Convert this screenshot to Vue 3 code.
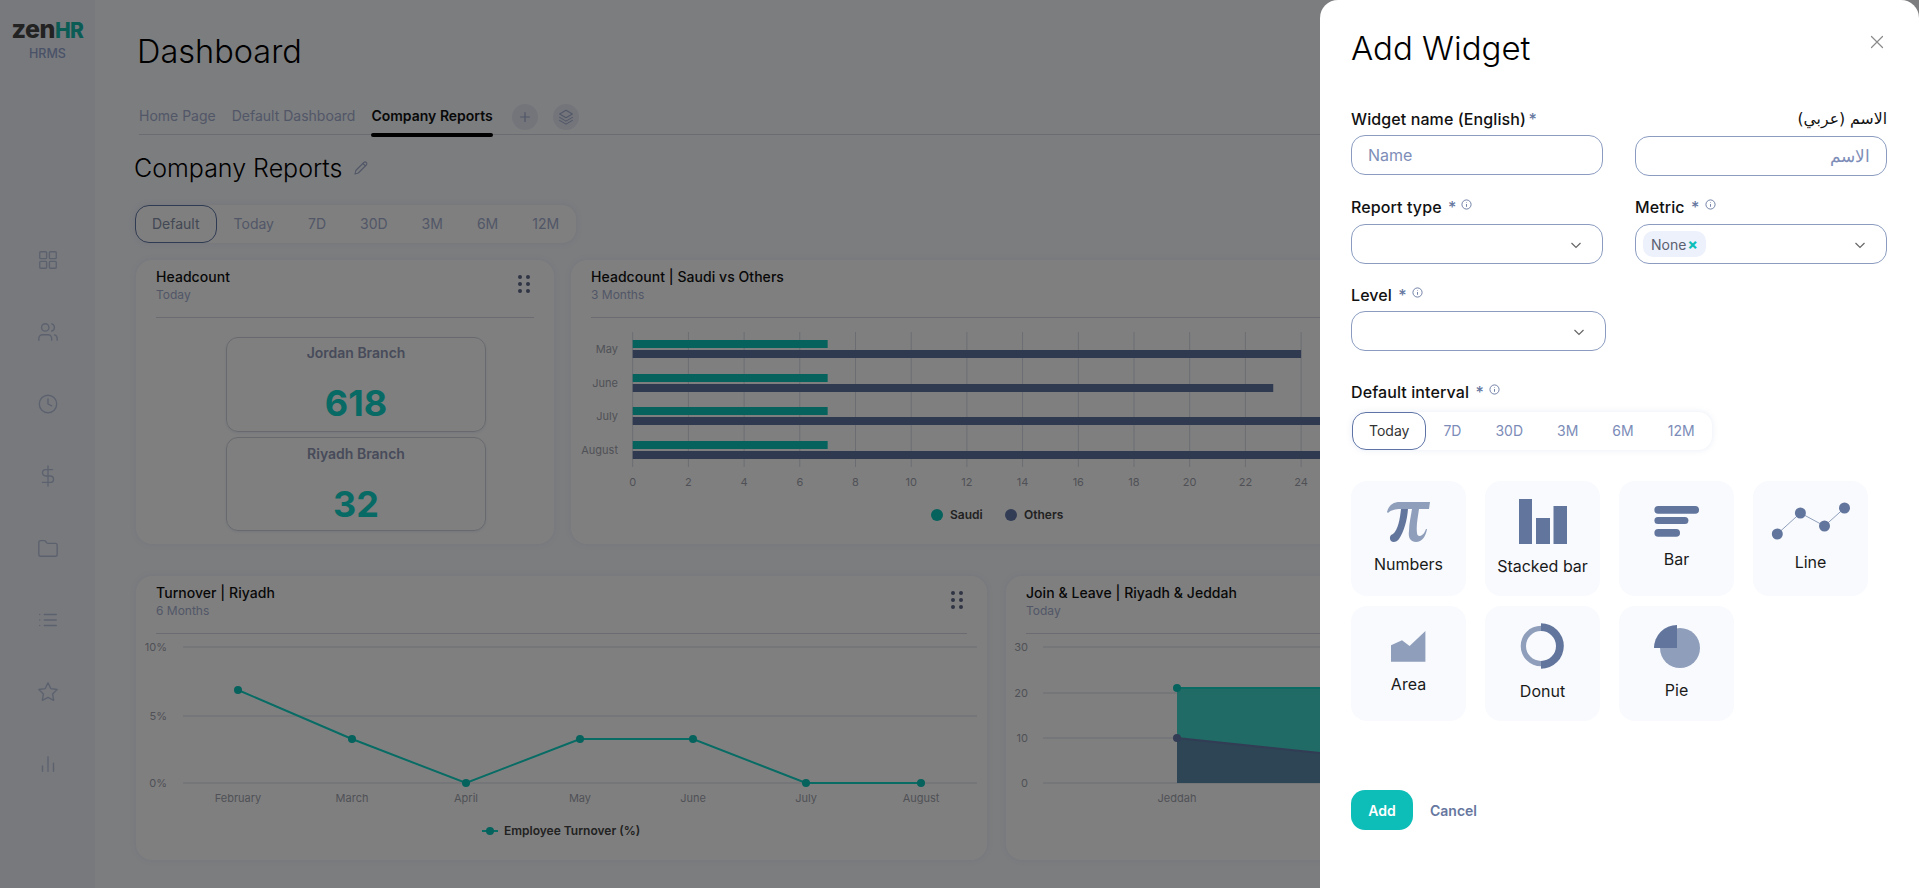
<script setup>
const navIcons = ['grid', 'users', 'clock', 'dollar', 'folder', 'list', 'star', 'bars']
const tabs = ['Home Page', 'Default Dashboard', 'Company Reports']
const mainIntervals = ['Default', 'Today', '7D', '30D', '3M', '6M', '12M']
const panelIntervals = ['Today', '7D', '30D', '3M', '6M', '12M']

const hTicks = [0, 2, 4, 6, 8, 10, 12, 14, 16, 18, 20, 22, 24, 26, 28]
const unit = 27.85
const x0 = 632.7
const hRows = [
  { label: 'May', y: 340, others: 24 },
  { label: 'June', y: 374, others: 23 },
  { label: 'July', y: 407, others: 26 },
  { label: 'August', y: 441, others: 26 },
]
const turnover = [
  { label: 'February', x: 238, y: 690 },
  { label: 'March', x: 352, y: 739 },
  { label: 'April', x: 466, y: 783 },
  { label: 'May', x: 580, y: 739 },
  { label: 'June', x: 693, y: 739 },
  { label: 'July', x: 806, y: 783 },
  { label: 'August', x: 921, y: 783 },
]
const turnoverLine = turnover.map((p) => `${p.x},${p.y}`).join(' ')
const turnoverGrid = [
  { label: '10%', y: 647 },
  { label: '5%', y: 716 },
  { label: '0%', y: 783 },
]
const joinGrid = [
  { label: '30', y: 647 },
  { label: '20', y: 693 },
  { label: '10', y: 738 },
  { label: '0', y: 783 },
]
const tiles = [
  { id: 'numbers', label: 'Numbers' },
  { id: 'stacked', label: 'Stacked bar' },
  { id: 'bar', label: 'Bar' },
  { id: 'line', label: 'Line' },
  { id: 'area', label: 'Area' },
  { id: 'donut', label: 'Donut' },
  { id: 'pie', label: 'Pie' },
]
</script>

<template>
  <div class="app">
    <aside class="sidebar">
      <div class="logo"><span class="zen">zen</span><span class="hr">HR</span></div>
      <div class="hrms">HRMS</div>
      <nav class="nav">
        <svg v-for="n in navIcons" :key="n" class="nav-icon" viewBox="0 0 24 24" fill="none" stroke="currentColor" stroke-width="1.5" stroke-linecap="round" stroke-linejoin="round">
          <template v-if="n === 'grid'">
            <rect x="3" y="3" width="7.5" height="7.5" rx="1" /><rect x="13.5" y="3" width="7.5" height="7.5" rx="1" />
            <rect x="3" y="13.5" width="7.5" height="7.5" rx="1" /><rect x="13.5" y="13.5" width="7.5" height="7.5" rx="1" />
          </template>
          <template v-else-if="n === 'users'">
            <path d="M16 21v-2a4 4 0 0 0-4-4H6a4 4 0 0 0-4 4v2" /><circle cx="9" cy="7" r="4" />
            <path d="M22 21v-2a4 4 0 0 0-3-3.87" /><path d="M16 3.13a4 4 0 0 1 0 7.75" />
          </template>
          <template v-else-if="n === 'clock'">
            <circle cx="12" cy="12" r="9.5" /><polyline points="12 6.5 12 12 16 14" />
          </template>
          <template v-else-if="n === 'dollar'">
            <line x1="12" y1="1" x2="12" y2="23" /><path d="M17 5H9.5a3.5 3.5 0 0 0 0 7h5a3.5 3.5 0 0 1 0 7H6" />
          </template>
          <template v-else-if="n === 'folder'">
            <path d="M4 21h16a2 2 0 0 0 2-2V9a2 2 0 0 0-2-2h-7.93a2 2 0 0 1-1.66-.9l-.82-1.2A2 2 0 0 0 7.93 4H4a2 2 0 0 0-2 2v13c0 1.1.9 2 2 2Z" />
          </template>
          <template v-else-if="n === 'list'">
            <line x1="8" y1="6" x2="21" y2="6" /><line x1="8" y1="12" x2="21" y2="12" /><line x1="8" y1="18" x2="21" y2="18" />
            <line x1="3" y1="6" x2="3.01" y2="6" /><line x1="3" y1="12" x2="3.01" y2="12" /><line x1="3" y1="18" x2="3.01" y2="18" />
          </template>
          <template v-else-if="n === 'star'">
            <polygon points="12 2 15.09 8.26 22 9.27 17 14.14 18.18 21.02 12 17.77 5.82 21.02 7 14.14 2 9.27 8.91 8.26" />
          </template>
          <template v-else>
            <line x1="18" y1="20" x2="18" y2="11" /><line x1="12" y1="20" x2="12" y2="4" /><line x1="6" y1="20" x2="6" y2="14" />
          </template>
        </svg>
      </nav>
    </aside>

    <main class="main">
      <h1 class="page-title">Dashboard</h1>
      <div class="tabs">
        <span v-for="(t, i) in tabs" :key="t" class="tab" :class="{ active: i === 2 }">{{ t }}</span>
        <span class="round-btn first">
          <svg viewBox="0 0 16 16" width="14" height="14" fill="none" stroke="currentColor" stroke-width="1.4" stroke-linecap="round"><path d="M8 3v10M3 8h10" /></svg>
        </span>
        <span class="round-btn">
          <svg viewBox="0 0 24 24" width="18" height="18" fill="none" stroke="currentColor" stroke-width="1.4" stroke-linejoin="round" stroke-linecap="round"><path d="M12 3 3.5 8 12 13l8.500-5z" /><path d="m3.500 12.500 8.500 5 8.500-5" /><path d="m3.500 16.500 8.500 5 8.500-5" /></svg>
        </span>
      </div>
      <div class="section-head">
        <h2 class="section-title">Company Reports</h2>
        <svg class="pencil" viewBox="0 0 16 16" width="16" height="16" fill="none" stroke="currentColor" stroke-width="1.1" stroke-linejoin="round"><path d="M2 14l.8-3.500 8-8a1.500 1.500 0 0 1 2.500 2.500l-8 8z" /><path d="M10 3.500l2.500 2.500" /></svg>
      </div>
      <div class="seg seg-main">
        <span v-for="(s, i) in mainIntervals" :key="s" class="seg-item" :class="{ on: i === 0 }">{{ s }}</span>
      </div>

      <div class="row row-top">
        <section class="card card-a">
          <header class="card-head">
            <div><div class="card-title">Headcount</div><div class="card-sub">Today</div></div>
            <div class="dots"><i v-for="d in 6" :key="d"></i></div>
          </header>
          <div class="stat">
            <div class="stat-label">Jordan Branch</div>
            <div class="stat-num">618</div>
          </div>
          <div class="stat stat-b">
            <div class="stat-label">Riyadh Branch</div>
            <div class="stat-num">32</div>
          </div>
        </section>

        <section class="card card-b">
          <header class="card-head">
            <div><div class="card-title">Headcount | Saudi vs Others</div><div class="card-sub">3 Months</div></div>
          </header>
          <svg class="chart" viewBox="571 318 900 226" width="900" height="226">
            <g v-for="t in hTicks" :key="t">
              <line :x1="x0 + t * unit" :x2="x0 + t * unit" y1="332" y2="467" class="grid-line" />
              <text :x="x0 + t * unit" y="486" text-anchor="middle" class="tick">{{ t }}</text>
            </g>
            <g v-for="r in hRows" :key="r.label">
              <rect :x="x0" :y="r.y" :width="7 * unit" height="8" class="fill-teal" />
              <rect :x="x0" :y="r.y + 10" :width="r.others * unit" height="8" class="fill-navy" />
              <text x="618" :y="r.y + 13" text-anchor="end" class="tick">{{ r.label }}</text>
            </g>
            <circle cx="937" cy="515" r="6" class="fill-teal" />
            <text x="950" y="519" class="legend">Saudi</text>
            <circle cx="1011" cy="515" r="6" class="fill-navy-2" />
            <text x="1024" y="519" class="legend">Others</text>
          </svg>
        </section>
      </div>

      <div class="row row-bottom">
        <section class="card card-c">
          <header class="card-head">
            <div><div class="card-title">Turnover | Riyadh</div><div class="card-sub">6 Months</div></div>
            <div class="dots"><i v-for="d in 6" :key="d"></i></div>
          </header>
          <svg class="chart" viewBox="136 634 851 226" width="851" height="226">
            <g v-for="g in turnoverGrid" :key="g.label">
              <line x1="183" x2="977" :y1="g.y" :y2="g.y" class="grid-line" />
              <text x="167" :y="g.y + 4" text-anchor="end" class="tick">{{ g.label }}</text>
            </g>
            <polyline :points="turnoverLine" fill="none" class="stroke-teal" stroke-width="2" />
            <g v-for="p in turnover" :key="p.label">
              <circle :cx="p.x" :cy="p.y" r="4" class="fill-teal" />
              <text :x="p.x" y="802" text-anchor="middle" class="tick">{{ p.label }}</text>
            </g>
            <line x1="482" x2="498" y1="831" y2="831" class="stroke-teal" stroke-width="2" />
            <circle cx="490" cy="831" r="4" class="fill-teal" />
            <text x="504" y="835" class="legend">Employee Turnover (%)</text>
          </svg>
        </section>

        <section class="card card-d">
          <header class="card-head">
            <div><div class="card-title">Join &amp; Leave | Riyadh &amp; Jeddah</div><div class="card-sub">Today</div></div>
          </header>
          <svg class="chart" viewBox="1006 634 500 226" width="500" height="226">
            <g v-for="g in joinGrid" :key="g.label">
              <line x1="1043" x2="1506" :y1="g.y" :y2="g.y" class="grid-line" />
              <text x="1028" :y="g.y + 4" text-anchor="end" class="tick">{{ g.label }}</text>
            </g>
            <polygon points="1177,688 1506,688 1506,783 1177,783" class="area-teal" />
            <polygon points="1177,738 1320,753 1506,775 1506,783 1177,783" class="area-navy" />
            <line x1="1177" x2="1506" y1="688" y2="688" class="stroke-teal" stroke-width="2" />
            <line x1="1177" y1="738" x2="1320" y2="753" class="stroke-navy" stroke-width="2" />
            <circle cx="1177" cy="688" r="4" class="fill-teal" />
            <circle cx="1177" cy="738" r="4" class="fill-navy-2" />
            <text x="1177" y="802" text-anchor="middle" class="tick">Jeddah</text>
          </svg>
        </section>
      </div>
    </main>

    <div class="backdrop"></div>

    <aside class="panel">
      <div class="panel-head">
        <h2 class="panel-title">Add Widget</h2>
        <svg class="close" viewBox="0 0 14 14" width="14" height="14" fill="none" stroke="currentColor" stroke-width="1.2" stroke-linecap="round"><path d="M1.500 1.500l11 11M12.500 1.500l-11 11" /></svg>
      </div>

      <div class="fields fields-1">
        <div class="field">
          <label class="label">Widget name (English) <em class="star tight">*</em></label>
          <div class="input placeholder">Name</div>
        </div>
        <div class="field field-ar">
          <label class="label ar" dir="rtl">الاسم (عربي)</label>
          <div class="input placeholder ar" dir="rtl">الاسم</div>
        </div>
      </div>

      <div class="fields fields-2">
        <div class="field">
          <label class="label">Report type <em class="star">*</em>
            <svg class="info" viewBox="0 0 12 12" width="11" height="11" fill="none" stroke="currentColor"><circle cx="6" cy="6" r="5" /><path d="M6 5.500v3M6 3.500v.6" /></svg>
          </label>
          <div class="input select"><svg class="chev" viewBox="0 0 12 12" width="12" height="12" fill="none" stroke="currentColor" stroke-width="1.2"><path d="M1.500 4l4.500 4.500L10.500 4" /></svg></div>
        </div>
        <div class="field">
          <label class="label">Metric <em class="star">*</em>
            <svg class="info" viewBox="0 0 12 12" width="11" height="11" fill="none" stroke="currentColor"><circle cx="6" cy="6" r="5" /><path d="M6 5.500v3M6 3.500v.6" /></svg>
          </label>
          <div class="input select with-chip">
            <span class="chip">None<b class="chip-x">×</b></span>
            <svg class="chev" viewBox="0 0 12 12" width="12" height="12" fill="none" stroke="currentColor" stroke-width="1.2"><path d="M1.500 4l4.500 4.500L10.500 4" /></svg>
          </div>
        </div>
      </div>

      <div class="field field-level">
        <label class="label">Level <em class="star">*</em>
          <svg class="info" viewBox="0 0 12 12" width="11" height="11" fill="none" stroke="currentColor"><circle cx="6" cy="6" r="5" /><path d="M6 5.500v3M6 3.500v.6" /></svg>
        </label>
        <div class="input select"><svg class="chev" viewBox="0 0 12 12" width="12" height="12" fill="none" stroke="currentColor" stroke-width="1.2"><path d="M1.500 4l4.500 4.500L10.500 4" /></svg></div>
      </div>

      <div class="field field-interval">
        <label class="label">Default interval <em class="star">*</em>
          <svg class="info" viewBox="0 0 12 12" width="11" height="11" fill="none" stroke="currentColor"><circle cx="6" cy="6" r="5" /><path d="M6 5.500v3M6 3.500v.6" /></svg>
        </label>
        <div class="seg seg-panel">
          <span v-for="(s, i) in panelIntervals" :key="s" class="seg-item" :class="{ on: i === 0 }">{{ s }}</span>
        </div>
      </div>

      <div class="tiles">
        <div v-for="t in tiles" :key="t.id" class="tile" :class="'tile-' + t.id">
          <svg class="tile-icon" viewBox="0 0 115 64" width="115" height="64">
            <g v-if="t.id === 'numbers'" transform="translate(35 20)">
              <path class="light" d="M1 11C3 4 7 1 14 1H44L43 8H33C32 16 30 24 31 32C31 35 34 36 36 34C38 33 39 30 40 28L41 28C40 35 36 41 30 41C24 41 22 36 23 30C23 22 25 15 26 8H15C9 8 5 9 2 12Z" />
              <path class="dark" d="M15 8H22C21 20 18 30 13 38C11 41 7 42 5 40C3 37 4 34 7 33C12 29 14 18 15 8Z" />
            </g>
            <g v-else-if="t.id === 'stacked'" class="dark">
              <rect x="34" y="18" width="13" height="45" /><rect x="51" y="37" width="14" height="26" /><rect x="68.500" y="25" width="13.500" height="38" />
            </g>
            <g v-else-if="t.id === 'bar'" class="dark">
              <rect x="35.400" y="25" width="44.600" height="7.700" rx="3.800" /><rect x="35.400" y="36" width="34" height="7" rx="3.500" /><rect x="35.400" y="48" width="25.600" height="7.700" rx="3.800" />
            </g>
            <g v-else-if="t.id === 'line'">
              <polyline points="24.300,53 47.400,32 71.500,45 91.500,27" fill="none" stroke="#8f9fbb" stroke-width="1" />
              <g class="dark"><circle cx="24.300" cy="53" r="5.500" /><circle cx="47.400" cy="32" r="5.500" /><circle cx="71.500" cy="45" r="5.500" /><circle cx="91.500" cy="27" r="5.500" /></g>
            </g>
            <polygon v-else-if="t.id === 'area'" class="light" transform="translate(40 25)" points="0,14.300 11,9.300 18.600,15 34.400,0 34.400,30.700 0,30.700" />
            <g v-else-if="t.id === 'donut'" transform="translate(56 40)">
              <path class="light" d="M0 -20.300A20.300 20.300 0 0 0 0 20.300V15A15 15 0 0 1 0 -15Z" />
              <path class="dark" d="M0 -22.800A22.800 22.800 0 0 1 0 22.800V15A15 15 0 0 0 0 -15Z" />
            </g>
            <g v-else>
              <circle class="light" cx="61" cy="42" r="20" />
              <path class="dark" d="M58 42V19A23 23 0 0 0 35 42Z" />
            </g>
          </svg>
          <div class="tile-label">{{ t.label }}</div>
        </div>
      </div>

      <div class="actions">
        <button class="btn-add">Add</button>
        <span class="btn-cancel">Cancel</span>
      </div>
    </aside>
  </div>
</template>

<style>
html, body { margin: 0; overflow: hidden; }
</style>

<style scoped>
.app {
  position: relative;
  display: flex;
  width: 1919px;
  height: 888px;
  overflow: hidden;
  background: #f8fafe;
  font-family: Inter, "DejaVu Sans", sans-serif;
  color: #222;
}
.sidebar {
  flex: 0 0 95px;
  background: #eef2fa;
  display: flex;
  flex-direction: column;
  align-items: center;
}
.logo { margin-top: 14px; font-size: 25px; line-height: 30px; font-weight: 800; letter-spacing: -0.5px; }
.zen { color: #444; }
.hr { color: #18b8ac; font-size: 21px; }
.hrms { margin-top: 0; font-size: 12.500px; line-height: 16px; font-weight: 500; color: #94a4d0; }
.nav { margin-top: 187px; display: flex; flex-direction: column; gap: 50px; }
.nav-icon { display: block; width: 22px; height: 22px; color: #b9c3dc; }

.main { flex: 1; min-width: 0; padding-left: 41px; }
.page-title { margin: 32px 0 0 1px; font-size: 32.5px; line-height: 40px; font-weight: 300; color: #000; }
.tabs { margin-top: 27px; height: 36px; display: flex; align-items: center; gap: 16px; border-bottom: 1px solid #d4d8e2; box-sizing: border-box; margin-left: 3px; }
.tab { position: relative; font-size: 14px; height: 35px; line-height: 33px; color: #a4aed0; }
.tab.active { font-weight: 600; color: #111; }
.tab.active::after { content: ""; position: absolute; left: 0; right: 0; bottom: -3px; height: 4px; border-radius: 2px; background: #000; }
.round-btn { width: 26px; height: 26px; border-radius: 50%; background: #e6eaf6; color: #a4aed0; display: flex; align-items: center; justify-content: center; margin-left: -1px; }
.round-btn.first { margin-left: 3px; }
.section-head { margin-top: 18px; display: flex; align-items: center; gap: 11px; margin-left: -2px; height: 30px; }
.section-title { margin: 0; font-size: 25px; line-height: 30px; font-weight: 300; color: #000; }
.pencil { color: #a4aed0; }

.seg { display: flex; width: fit-content; align-items: stretch; background: #fff; border-radius: 14px; font-size: 14px; color: #7c8cb8; box-shadow: 0 0 6px rgba(110, 130, 190, 0.15); }
.seg-main { margin: 22px 0 0 -1px; height: 38px; color: #a4aed0; }
.seg-panel { height: 38px; margin-top: 10px; margin-left: 1px; align-self: flex-start; }
.seg-item { display: flex; align-items: center; padding: 0 17px; line-height: 20px; }
.seg-item.on { border: 1px solid #5e74a6; border-radius: 14px; padding: 0 16px; color: #333; }
.seg-main .seg-item.on { color: #8590a8; }

.row { display: flex; height: 284px; }
.row-top { margin-top: 17px; gap: 17px; }
.row-bottom { margin-top: 32px; gap: 19px; }
.card { background: #fff; border-radius: 16px; box-shadow: 0 0 6px rgba(110, 130, 190, 0.12); overflow: hidden; flex: none; }
.card-a { width: 418px; }
.card-b { width: 900px; }
.card-c { width: 851px; }
.card-d { width: 500px; }
.card-head { margin: 0 20px; padding: 8px 0 15px; display: flex; justify-content: space-between; border-bottom: 1px solid #d4d8e2; height: 34px; }
.card-title { font-size: 14px; line-height: 18px; font-weight: 500; color: #111; letter-spacing: 0.05px; }
.card-sub { margin-top: 1px; font-size: 12px; line-height: 16px; color: #a4aed0; }
.dots { display: grid; grid-template-columns: 4px 4px; column-gap: 4px; row-gap: 3px; margin: 7px 4px 0 0; height: 18px; }
.dots i { width: 4px; height: 4px; border-radius: 50%; background: #606a8a; }
.stat { margin: 19px 0 0 90px; width: 258px; height: 93px; border: 1px solid #cfd3dc; border-radius: 12px; text-align: center; box-shadow: 0 1px 3px rgba(110, 130, 190, 0.15); }
.stat-b { margin-top: 5px; height: 92px; }
.stat-label { margin-top: 5px; font-size: 14px; line-height: 20px; font-weight: 600; color: #8f96b4; }
.stat-b .stat-label { margin-top: 6px; }
.stat-num { margin-top: 18px; font-size: 36px; line-height: 44px; font-weight: 700; color: #10d4c8; }

.chart { display: block; }
.grid-line { stroke: #d6dae4; stroke-width: 1; }
.tick { font-size: 11px; fill: #9fa3ae; font-family: Inter, sans-serif; }
.legend { font-size: 12px; font-weight: 600; fill: #444; font-family: Inter, sans-serif; }
.fill-teal { fill: #0cc4b8; }
.fill-navy { fill: #5e74a0; }
.fill-navy-2 { fill: #6478a8; }
.stroke-teal { stroke: #10d8cb; }
.stroke-navy { stroke: #6478a8; }
.area-teal { fill: #40d6ca; }
.area-navy { fill: #5a8aaa; }

.backdrop { position: absolute; inset: 0; background: rgba(0, 0, 0, 0.5); }

.panel {
  position: absolute;
  top: 0;
  right: 0;
  bottom: 0;
  width: 599px;
  box-sizing: border-box;
  padding: 28px 32px 0 31px;
  background: #fff;
  border-radius: 18px 18px 0 0;
}
.panel-head { display: flex; justify-content: space-between; align-items: flex-start; }
.panel-title { margin: 0; font-size: 33px; line-height: 40px; font-weight: 300; color: #000; }
.close { color: #8a8a8a; margin: 7px 3px 0 0; }
.fields { display: grid; grid-template-columns: 252px 252px; column-gap: 32px; }
.fields-1 { margin-top: 41px; }
.fields-2 { margin-top: 21px; }
.fields-2 .input { margin-top: 7px; }
.field { display: flex; flex-direction: column; min-width: 0; }
.field-level { margin-top: 21px; width: 255px; }
.field-interval { margin-top: 31px; }
.label { display: flex; align-items: center; font-size: 16px; letter-spacing: 0.1px; line-height: 20px; font-weight: 500; color: #111; white-space: pre-wrap; height: 20px; }
.label.ar { font-family: "DejaVu Sans", sans-serif; font-weight: 400; font-size: 15.700px; letter-spacing: 0; }
.star { font-style: normal; color: #6677a0; margin-left: 2px; font-weight: 500; }
.star.tight { margin-left: -2px; }
.info { color: #6677a0; margin-left: 5px; margin-top: -5px; }
.input { margin-top: 6px; box-sizing: border-box; height: 40px; border: 1px solid #8b9cc0; border-radius: 14px; background: #fff; display: flex; align-items: center; position: relative; padding: 0 16px; font-size: 16px; }
.placeholder { color: #7e8eb8; }
.field-ar .input { margin-top: 7px; }
.input.ar { font-family: "DejaVu Sans", sans-serif; font-size: 16.500px; font-weight: 300; }
.field-level .input { margin-top: 6px; }
.chev { position: absolute; right: 20px; top: 14px; color: #666; }
.with-chip { padding-left: 7px; }
.chip { display: inline-flex; align-items: center; height: 26px; padding: 0 8px; border-radius: 10px; background: #edf1fc; color: #5a6070; font-size: 14px; }
.chip-x { color: #0cbdb8; font-size: 15px; font-weight: 800; line-height: 14px; margin-left: 1px; }

.tiles { margin-top: 31px; display: grid; grid-template-columns: repeat(4, 115px); grid-auto-rows: 115px; column-gap: 19px; row-gap: 10px; }
.tile { background: #f9fafe; border-radius: 16px; display: flex; flex-direction: column; align-items: center; }
.tile-icon { display: block; flex: none; }
.tile-label { font-size: 16px; line-height: 20px; color: #1a1a1a; }
.tile-numbers .tile-label { margin-top: 9px; }
.tile-stacked .tile-label { margin-top: 11px; }
.tile-bar .tile-label { margin-top: 4px; }
.tile-line .tile-label { margin-top: 7px; }
.tile-area .tile-label { margin-top: 4px; }
.tile-donut .tile-label { margin-top: 11px; }
.tile-pie .tile-label { margin-top: 10px; }
.dark { fill: #62759c; }
.light { fill: #8f9fbb; }

.actions { position: absolute; left: 31px; top: 790px; display: flex; align-items: center; gap: 17px; }
.btn-add { width: 62px; height: 40px; border: 0; border-radius: 14px; background: #0cbdb8; color: #fff; font: 600 14px Inter, sans-serif; }
.btn-cancel { font-size: 14px; font-weight: 600; color: #6677a0; }
</style>
